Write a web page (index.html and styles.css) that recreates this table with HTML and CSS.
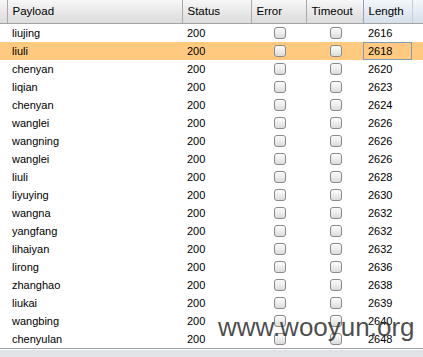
FILE: index.html
```html
<!DOCTYPE html>
<html>
<head>
<meta charset="utf-8">
<link rel="stylesheet" href="styles.css">
</head>
<body>
<div class="panel">
  <table class="grid">
    <colgroup>
      <col class="c-edge"><col class="c-payload"><col class="c-status"><col class="c-error"><col class="c-timeout"><col class="c-length"><col class="c-extra">
    </colgroup>
    <thead>
      <tr>
        <th></th><th>Payload</th><th>Status</th><th>Error</th><th>Timeout</th><th class="sorted">Length</th><th class="sorted-tail"></th>
      </tr>
    </thead>
    <tbody>
      <tr><td></td><td>liujing</td><td>200</td><td class="cb"><span class="box"></span></td><td class="cb"><span class="box"></span></td><td>2616</td><td></td></tr>
      <tr class="sel"><td></td><td>liuli</td><td>200</td><td class="cb"><span class="box"></span></td><td class="cb"><span class="box"></span></td><td class="focus">2618</td><td></td></tr>
      <tr><td></td><td>chenyan</td><td>200</td><td class="cb"><span class="box"></span></td><td class="cb"><span class="box"></span></td><td>2620</td><td></td></tr>
      <tr><td></td><td>liqian</td><td>200</td><td class="cb"><span class="box"></span></td><td class="cb"><span class="box"></span></td><td>2623</td><td></td></tr>
      <tr><td></td><td>chenyan</td><td>200</td><td class="cb"><span class="box"></span></td><td class="cb"><span class="box"></span></td><td>2624</td><td></td></tr>
      <tr><td></td><td>wanglei</td><td>200</td><td class="cb"><span class="box"></span></td><td class="cb"><span class="box"></span></td><td>2626</td><td></td></tr>
      <tr><td></td><td>wangning</td><td>200</td><td class="cb"><span class="box"></span></td><td class="cb"><span class="box"></span></td><td>2626</td><td></td></tr>
      <tr><td></td><td>wanglei</td><td>200</td><td class="cb"><span class="box"></span></td><td class="cb"><span class="box"></span></td><td>2626</td><td></td></tr>
      <tr><td></td><td>liuli</td><td>200</td><td class="cb"><span class="box"></span></td><td class="cb"><span class="box"></span></td><td>2628</td><td></td></tr>
      <tr><td></td><td>liyuying</td><td>200</td><td class="cb"><span class="box"></span></td><td class="cb"><span class="box"></span></td><td>2630</td><td></td></tr>
      <tr><td></td><td>wangna</td><td>200</td><td class="cb"><span class="box"></span></td><td class="cb"><span class="box"></span></td><td>2632</td><td></td></tr>
      <tr><td></td><td>yangfang</td><td>200</td><td class="cb"><span class="box"></span></td><td class="cb"><span class="box"></span></td><td>2632</td><td></td></tr>
      <tr><td></td><td>lihaiyan</td><td>200</td><td class="cb"><span class="box"></span></td><td class="cb"><span class="box"></span></td><td>2632</td><td></td></tr>
      <tr><td></td><td>lirong</td><td>200</td><td class="cb"><span class="box"></span></td><td class="cb"><span class="box"></span></td><td>2636</td><td></td></tr>
      <tr><td></td><td>zhanghao</td><td>200</td><td class="cb"><span class="box"></span></td><td class="cb"><span class="box"></span></td><td>2638</td><td></td></tr>
      <tr><td></td><td>liukai</td><td>200</td><td class="cb"><span class="box"></span></td><td class="cb"><span class="box"></span></td><td>2639</td><td></td></tr>
      <tr><td></td><td>wangbing</td><td>200</td><td class="cb"><span class="box"></span></td><td class="cb"><span class="box"></span></td><td>2640</td><td></td></tr>
      <tr><td></td><td>chenyulan</td><td>200</td><td class="cb"><span class="box"></span></td><td class="cb"><span class="box"></span></td><td>2648</td><td></td></tr>
    </tbody>
  </table>
  <div class="spacer"></div>
  <div class="footer"></div>
  <div class="watermark">www.wooyun.org</div>
</div>
</body>
</html>
```

FILE: styles.css
```css
html, body {
  margin: 0;
  padding: 0;
  background: #ffffff;
}

.panel {
  position: relative;
  width: 423px;
  height: 357px;
  overflow: hidden;
  font-family: "Liberation Sans", Arial, sans-serif;
  font-size: 11px;
  color: #000;
}

.grid {
  width: 423px;
  border-collapse: collapse;
  table-layout: fixed;
}

.c-edge { width: 7px; }
.c-payload { width: 175px; }
.c-status { width: 69px; }
.c-error { width: 55px; }
.c-timeout { width: 57px; }
.c-length { width: 49px; }
.c-extra { width: 11px; }

.grid th {
  height: 22px;
  padding: 0 0 1px 5px;
  text-align: left;
  font-weight: normal;
  font-size: 11.5px;
  color: #000;
  background: linear-gradient(#f7f7f7, #e6e6e6 60%, #dcdcdc);
  border-left: 1px solid #a9a9a9;
  border-bottom: 1px solid #a3a3a3;
  white-space: nowrap;
  overflow: hidden;
}

.grid th:first-child {
  border-left: none;
  padding: 0;
}

.grid th.sorted {
  background: linear-gradient(#f2f6fa, #e0e8f1 60%, #d5dfea);
  border-left: 1px solid #8da5c0;
}

.grid th.sorted-tail {
  background: linear-gradient(#f2f6fa, #e0e8f1 60%, #d5dfea);
  border-left: 1px solid #c4cfdb;
}

.grid td {
  height: 18px;
  padding: 0 0 0 5px;
  white-space: nowrap;
  overflow: hidden;
  line-height: 18px;
}

.grid td:first-child {
  padding: 0;
}

.grid td.cb {
  padding: 0 0 0 3px;
  text-align: center;
  line-height: 0;
}

.grid tr.sel td {
  background: #ffca80;
}

.grid td.focus {
  box-shadow: inset 0 0 0 1px #7f9db9;
}

.box {
  display: inline-block;
  width: 10px;
  height: 10px;
  border: 1px solid #8a8a8a;
  border-radius: 3px;
  background: linear-gradient(#fdfdfd, #dcdcdc);
  vertical-align: middle;
}

.spacer {
  height: 0;
  border-bottom: 1px solid #a0a0a0;
}

.footer {
  height: 12px;
  border-top: 1px solid #ffffff;
  background: linear-gradient(#dde0e4, #e8eaed);
}

.watermark {
  position: absolute;
  left: 218px;
  top: 312px;
  font-family: "Liberation Sans", Arial, sans-serif;
  font-size: 26px;
  line-height: 30px;
  color: rgba(45, 45, 45, 0.85);
  white-space: nowrap;
}
```
